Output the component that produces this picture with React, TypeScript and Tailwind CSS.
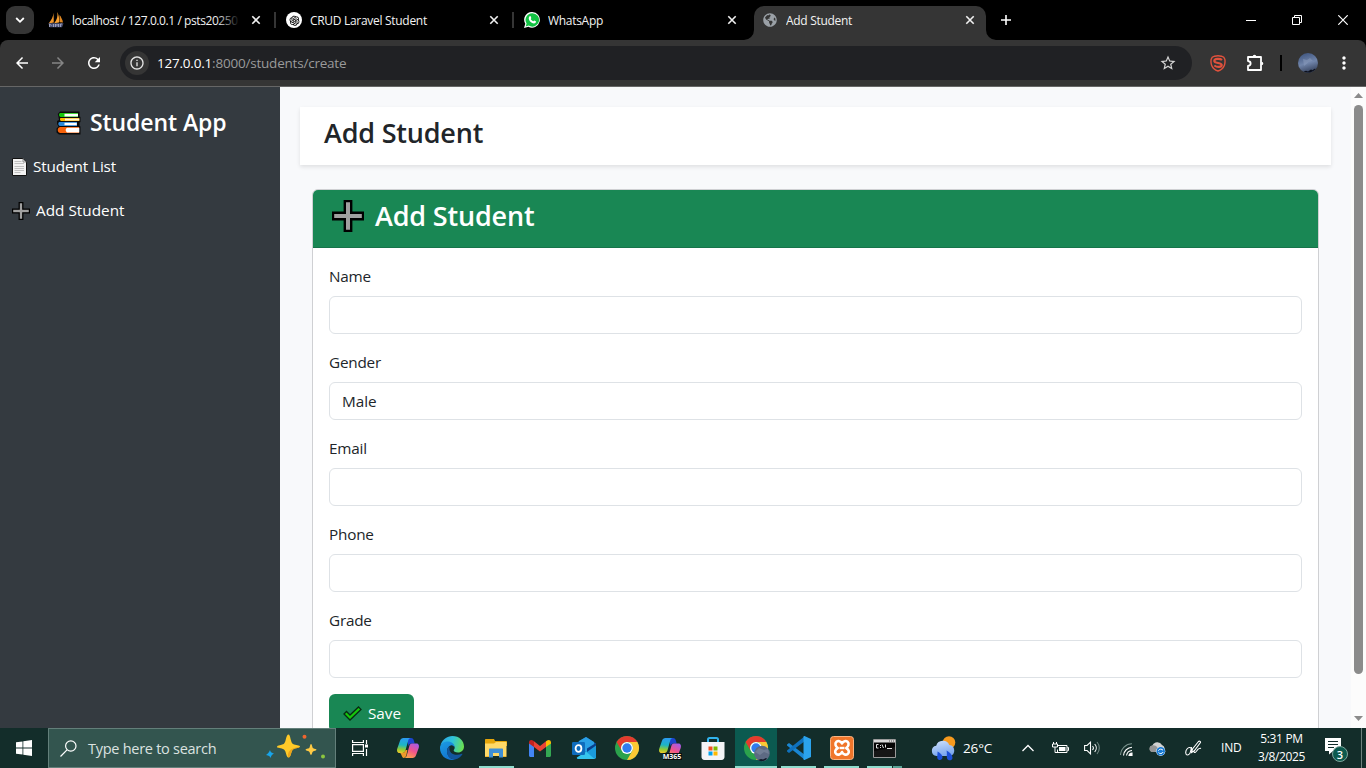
import type { ReactNode } from "react";
import { MdArrowBack, MdArrowForward, MdRefresh, MdStarBorder, MdInfoOutline, MdMoreVert } from "react-icons/md";
import { AiOutlineOpenAI } from "react-icons/ai";
import { FaGlobeAmericas } from "react-icons/fa";

/* ---------- browser chrome ---------- */

function SailsIcon() {
  return (
    <svg width="16" height="16" viewBox="0 0 16 16">
      <path d="M5.6.8C5.200 4.500 3.600 8 .6 11.500l5.200-.9z" fill="#f0962c" />
      <path d="M9.200 0C10 4 9.200 7.500 6.200 11.200l4.800-.7C11.500 6.500 10.800 3 9.200 0z" fill="#f8a030" />
      <path d="M11.500 3c1.700 2 2.900 4.500 3.500 7.500l-3.500-.3z" fill="#dd8622" />
      <path d="M.5 11.200h15l-1.500 4H1.500z" fill="#4d5276" />
      <path d="M1.500 15v-3l2 1.500M5.500 15v-3M7.500 15v-3l1.500 1.500 1.500-1.500v3M12.500 15v-3h1.500" stroke="#a9aecb" strokeWidth=".8" fill="none" />
    </svg>
  );
}

function CloseX() {
  return (
    <svg width="10" height="10" viewBox="0 0 10 10" stroke="#f1f1f1" strokeWidth="1.600">
      <path d="M1.300 1.300l7.400 7.400M8.700 1.300L1.300 8.700" />
    </svg>
  );
}

function Tab({ icon, title, active, divider, fade }: { icon: ReactNode; title: string; active?: boolean; divider?: boolean; fade?: boolean }) {
  return (
    <div className={active ? "relative mt-1.5 flex h-[34px] w-[232px] shrink-0 items-start rounded-t-[10px] bg-[#353535] pl-2" : "relative mt-1.5 flex h-[34px] w-[238px] shrink-0 items-start pl-2"}>
      <div className="mt-1.5 flex size-4 shrink-0 items-center justify-center">{icon}</div>
      <div className={(fade ? "tracking-[-0.42px]" : "tracking-[-0.3px]") + " relative ml-2 mt-[5px] w-[168px] overflow-hidden whitespace-nowrap text-[12px] leading-5 text-[#f2f2f2]"}>
        {title}
        {fade && <div className="absolute inset-y-0 right-0 w-6 bg-linear-to-r from-transparent to-black" />}
      </div>
      <div className="ml-[11px] mt-[9px]"><CloseX /></div>
      {divider && <div className="ml-[13px] mt-1.5 h-4 w-0.5 bg-[#353535]" />}
      {active && (
        <>
          <svg className="absolute -left-2.5 bottom-0" width="10" height="10"><path d="M10 0v10H0A10 10 0 0 0 10 0z" fill="#353535" /></svg>
          <svg className="absolute -right-2.5 bottom-0" width="10" height="10"><path d="M0 0v10h10A10 10 0 0 1 0 0z" fill="#353535" /></svg>
        </>
      )}
    </div>
  );
}

function TabStrip() {
  return (
    <div className="flex h-10 shrink-0 bg-black pl-1.5">
      <div className="mr-1.5 mt-1.5 flex size-7 items-center justify-center rounded-[9px] bg-[#353535]">
        <svg width="10" height="10" viewBox="0 0 10 10" fill="none" stroke="#fff" strokeWidth="1.800"><path d="M1.200 3l3.800 3.800L8.800 3" /></svg>
      </div>
      <Tab icon={<SailsIcon />} title="localhost / 127.0.0.1 / psts20250" divider fade />
      <Tab
        icon={<div className="flex size-4 items-center justify-center rounded-full bg-white text-black"><AiOutlineOpenAI size={13} /></div>}
        title="CRUD Laravel Student"
        divider
      />
      <Tab
        icon={
          <svg width="16" height="16" viewBox="0 0 16 16">
            <path d="M8.200 0a7.800 7.800 0 1 1-3.800 14.700L0 16l1.300-4.200A7.800 7.800 0 0 1 8.200 0z" fill="#fff" />
            <path d="M8.200 1.200a6.700 6.700 0 1 1-3.500 12.300l-3 .9.900-2.900A6.700 6.700 0 0 1 8.200 1.200z" fill="#12c143" />
            <path d="M5.600 4.300c.3-.3.900-.3 1.100.1l.6 1.500c.1.300-.6.900-.6 1.200.5 1 1.400 1.800 2.400 2.200.4 0 .8-.9 1.200-.8l1.500.8c.4.200.1 1.300-.4 1.700-1.500 1.200-4.200-.2-5.500-1.700C4.800 7.900 4.100 5.800 5.600 4.300z" fill="#fff" />
          </svg>
        }
        title="WhatsApp"
      />
      <Tab icon={<FaGlobeAmericas size={14} color="#9aa0a6" />} title="Add Student" active />
      <div className="ml-[15px] mt-[15px]">
        <svg width="10" height="10" viewBox="0 0 10 10" stroke="#fff" strokeWidth="1.600"><path d="M5 0v10M0 5h10" /></svg>
      </div>
      <div className="ml-auto flex h-10">
        <div className="flex w-[46px] items-center justify-center">
          <svg width="10" height="10" stroke="#fff"><path d="M0 5.500h10" /></svg>
        </div>
        <div className="flex w-[46px] items-center justify-center">
          <svg width="10" height="10" stroke="#fff" fill="none"><path d="M.5 2.500h7v7h-7zM2.500 2.500v-2h7v7h-2" /></svg>
        </div>
        <div className="flex w-[46px] items-center justify-center">
          <svg width="10" height="10" stroke="#fff" strokeWidth="1.200"><path d="M.3.3l9.400 9.400M9.700.3L.3 9.700" /></svg>
        </div>
      </div>
    </div>
  );
}

function Toolbar() {
  return (
    <div className="h-[47px] shrink-0 bg-black">
      <div className="flex h-[47px] items-center rounded-t-lg border-b border-[#666] bg-[#353535] pl-[13px]">
        <div className="flex w-[107px] gap-[18px]">
          <MdArrowBack size={18} color="#fff" />
          <MdArrowForward size={18} color="#858585" />
          <MdRefresh size={18} color="#fff" />
        </div>
        <div className="flex h-[34px] w-[1072px] items-center rounded-full bg-[#202124] pl-[5px] pr-[15px]">
          <div className="flex size-6 items-center justify-center rounded-full bg-[#353535]"><MdInfoOutline size={16} color="#e3e3e3" /></div>
          <div className="ml-2 text-[13.500px] tracking-[-0.210px] text-[#9a9a9a]"><span className="text-white">127.0.0.1</span>:8000/students/create</div>
          <MdStarBorder size={18} color="#d5d5d5" className="ml-auto" />
        </div>
        <svg className="ml-[18px]" width="16" height="17" viewBox="0 0 16 17" fill="none" stroke="#e0523d">
          <path d="M4.500 1.200C6 .8 10 .8 11.500 1.200c1.700.5 3 1.500 3.300 3 .4 2 .3 4-.4 6C13.500 12.700 11 15 8 16c-3-1-5.500-3.300-6.400-5.800-.7-2-.8-4-.4-6 .3-1.500 1.600-2.500 3.300-3z" strokeWidth="1.400" />
          <path d="M12 5C10 3.300 4.300 3.500 4.300 6c0 2.700 7.400 1.300 7.400 4 0 2.500-4.800 2.500-7.400.5" strokeWidth="2.200" />
        </svg>
        <svg className="ml-5" width="18" height="18" viewBox="0 0 18 18" fill="none" stroke="#fff" strokeWidth="1.800">
          <path d="M2 3h13v13H2v-4c3.500-.5 3.500-4.500 0-5z" strokeLinejoin="round" />
          <path d="M6.700 2.500a1.800 1.800 0 0 1 3.600 0zM15.500 7.700a1.800 1.800 0 0 1 0 3.600z" fill="#fff" stroke="none" />
        </svg>
        <div className="ml-4 h-4 w-0.5 bg-black" />
        <svg className="ml-4" width="20" height="20">
          <defs><linearGradient id="sky" x1="0" y1="0" x2=".3" y2="1"><stop offset="0" stopColor="#384f7a" /><stop offset=".6" stopColor="#7185aa" /><stop offset="1" stopColor="#3d4a66" /></linearGradient></defs>
          <circle cx="10" cy="10" r="10" fill="url(#sky)" />
          <path d="M5 6l4 1 3-2 3 3-4 1-5 4z" fill="#8b9bbb" opacity=".55" />
          <path d="M5.500 18.500l2.500-.8 2 .8 3-2 1.500.8 2-1.500 1.200.2A10 10 0 0 1 5.500 18.500z" fill="#0c101c" />
        </svg>
        <MdMoreVert size={20} color="#fff" className="ml-4" />
      </div>
    </div>
  );
}

/* ---------- page ---------- */

function HeavyPlus({ size, stroke = 1.500 }: { size: number; stroke?: number }) {
  return (
    <svg width={size} height={size} viewBox="0 0 32 32">
      <path d="M12.800 1h6.400v11.800H31v6.400H19.200V31h-6.400V19.200H1v-6.400h11.800z" fill="#a0a0a0" stroke="#000" strokeWidth={stroke * 1.400} />
    </svg>
  );
}

function Books() {
  return (
    <svg width="25" height="24" viewBox="0 0 25 24">
      <path d="M4 .5h19.500v5L24.500 6v5l-1 .5V15l1 .5v8H3l-2.500-2v-4l2-2L1 13v-3l2-1-.5-3L1.800 3z" fill="#0b0b0b" />
      <path d="M4 2h18v4H4.500C2.600 5.500 2.600 2.700 4 2z" fill="#16c60c" /><path d="M8.500 2.800H22v2.700H8.500z" fill="#fff" />
      <path d="M4.500 7h18.800v3H5c-1.200-.5-1.300-2.500-.5-3z" fill="#ffb900" /><path d="M9 7.600h14.300v1.900H9z" fill="#fff4dc" />
      <path d="M3.500 11H21v4H4c-2-.3-2.300-3.400-.5-4z" fill="#2b88d8" /><path d="M8.500 11.800h12.300v2.400H8.500z" fill="#fff" />
      <path d="M4 16h19v6H4c-3-.6-3-5.400 0-6z" fill="#f7630c" /><path d="M11 16.800h12.300v4.600H11c-1.800-1-1.800-3.600 0-4.600z" fill="#fff" />
    </svg>
  );
}

function PageIcon() {
  return (
    <svg width="15" height="18" viewBox="0 0 15 18">
      <path d="M.5.500h10.500l3.500 3.500v13.500H.5z" fill="#f2f2f2" stroke="#111" />
      <path d="M2.500 3.500h7M2.500 5.500h9.500M2.500 8.500h9.500M2.500 10.500h9.500M2.500 12.500h9.500M2.500 14.500h6" stroke="#b3b3b3" strokeWidth=".8" />
      <path d="M11 .5v3.500h3.500" fill="none" stroke="#777" strokeWidth=".8" />
    </svg>
  );
}

function Sidebar() {
  return (
    <aside className="flex w-[280px] shrink-0 flex-col bg-[#343a40] text-white">
      <div className="mt-5 flex h-8 items-center pl-14">
        <Books />
        <span className="-mt-0.5 ml-[9px] text-[23px] font-semibold leading-8 tracking-[-0.08px]">Student App</span>
      </div>
      <div className="ml-3 mt-2 flex h-10 items-center">
        <PageIcon />
        <span className="-mt-0.5 ml-1.5 text-[15.300px] tracking-[-0.12px]">Student List</span>
      </div>
      <div className="ml-3 mt-1 flex h-10 items-center">
        <HeavyPlus size={18} stroke={1.600} />
        <span className="-mt-0.5 ml-1.5 text-[15.300px] tracking-[0.02px]">Add Student</span>
      </div>
    </aside>
  );
}

function Field({ label, value }: { label: string; value?: string }) {
  return (
    <div className="mb-4">
      <div className="mb-2 h-6 text-[15.300px] leading-6 tracking-[-0.22px]">{label}</div>
      <div className="h-[38px] rounded-md border border-[#dee2e6] px-3 text-[15.300px] leading-9 tracking-[-0.05px]">{value}</div>
    </div>
  );
}

function Content() {
  return (
    <main className="min-w-0 flex-1 bg-[#f8f9fb] p-5 text-[#212529]">
      <div className="h-[58px] bg-white pl-6 text-[27px] font-semibold leading-[51px] tracking-[-0.2px] shadow-[0_2px_4px_rgba(0,0,0,0.1)]">Add Student</div>
      <div className="mx-3 mt-6 h-[600px] overflow-hidden rounded-md border border-[#cfd0d3] bg-white">
        <div className="flex h-[58px] items-start border-b border-[#16744a] bg-[#198754] pl-[19px] text-white">
          <div className="mt-2.5"><HeavyPlus size={32} stroke={1.700} /></div>
          <span className="ml-[11px] text-[27px] font-semibold leading-[51px] tracking-[-0.18px]">Add Student</span>
        </div>
        <div className="p-4">
          <Field label="Name" />
          <Field label="Gender" value="Male" />
          <Field label="Email" />
          <Field label="Phone" />
          <Field label="Grade" />
          <div className="flex h-[38px] w-[85px] items-center rounded-md bg-[#198754] pl-3.5 text-white">
            <svg width="19" height="15" viewBox="0 0 19 15"><path d="M1 8l2.500-2.500L7 9 15.500 1 18 3.400 7 14z" fill="#16c60c" stroke="#062b12" strokeWidth="1.300" /></svg>
            <span className="ml-1.5 text-[15.300px] tracking-[-0.05px]">Save</span>
          </div>
        </div>
      </div>
    </main>
  );
}

function Scrollbar() {
  return (
    <div className="flex w-[15px] shrink-0 flex-col items-center bg-[#fcfcfc] pt-1.5">
      <svg width="9" height="5"><path d="M4.500 0L9 5H0z" fill="#8b8b8b" /></svg>
      <div className="mt-[7px] h-[569px] w-[9px] rounded-full bg-[#8b8b8b]" />
      <svg className="mt-[42px]" width="9" height="5"><path d="M4.500 5L9 0H0z" fill="#8b8b8b" /></svg>
    </div>
  );
}

/* ---------- taskbar ---------- */

function Copilot({ tag }: { tag?: boolean }) {
  return (
    <svg width="24" height="24" viewBox="0 0 24 24">
      <defs>
        <linearGradient id="cpa" x1=".3" y1="0" x2=".2" y2="1"><stop offset="0" stopColor="#2b9cf0" /><stop offset=".45" stopColor="#1cb5c4" /><stop offset=".75" stopColor="#8fcb35" /><stop offset="1" stopColor="#f5c927" /></linearGradient>
        <linearGradient id="cpb" x1=".8" y1="0" x2=".3" y2="1"><stop offset="0" stopColor="#a45bea" /><stop offset=".5" stopColor="#f0528c" /><stop offset="1" stopColor="#ffa04a" /></linearGradient>
      </defs>
      <path d="M11 2h4c1.800 0 2.500 1.300 3 3l.7 2.500h-3c-2 0-2.700 1-3.200 2.700z" fill="#1b45cf" />
      <path d="M7.500 2h7c-1.700.3-2 1.500-2.400 3L9.600 14c-.6 2-1.500 3-3.300 3H3.500C1 17 .7 14.500 1.300 12.500L4 4.700C4.700 2.800 5.700 2 7.500 2z" fill="url(#cpa)" />
      {!tag && <path d="M6.300 17c1.800 0 2.700-1 3.300-3l1.800 0-1 5c-.4 2-1.700 3-3.200 3-1.400-.8-1.500-3.500-3-5z" fill="#f09a2b" />}
      <path d="M16 7.500h4.500c2.500 0 2.800 2.500 2.200 4.500L20 19.300c-.7 1.900-1.700 2.700-3.500 2.700H8.200c1.700-.3 2.300-1.500 2.700-3l2.300-8.500c.5-2 1.200-3 2.800-3z" fill="url(#cpb)" />
    </svg>
  );
}

function M365() {
  return (
    <div className="relative size-6">
      <Copilot tag />
      <div className="absolute left-[5px] top-[17px] h-[7px] w-[19px] bg-[#0b0f0e] text-center text-[7px] font-bold leading-[7px] text-white">M365</div>
    </div>
  );
}

function Edge() {
  return (
    <svg width="24" height="24" viewBox="0 0 24 24">
      <defs>
        <linearGradient id="ea" x1="0" y1=".3" x2="1" y2=".5"><stop offset="0" stopColor="#2aa6e6" /><stop offset=".5" stopColor="#30c4d8" /><stop offset="1" stopColor="#6be04f" /></linearGradient>
        <linearGradient id="eb" x1="0" y1="0" x2=".5" y2="1"><stop offset="0" stopColor="#1b9de2" /><stop offset="1" stopColor="#1373d1" /></linearGradient>
      </defs>
      <path d="M.6 9C2.400 3.500 7 0 12.300 0 19.500 0 24 5 24 10.500c0 3.500-2.500 6-6 6-3 0-4.500-1.300-4.300-2.200.2-.7 1-1 1-2.800C14.500 9 11.500 7 8.200 7 5 7 2.200 8 .6 9z" fill="url(#ea)" />
      <path d="M0 12c0-4 3.500-6.500 7.700-6.500 4 0 6.900 2.500 6.900 6-.4-1.500-2-2.500-3.300-2.300C8.500 10 7 12.300 7 15c0 5 4 8.500 8 8.500-1 .4-2 .5-3 .5C5.500 24 0 19 0 12z" fill="url(#eb)" />
      <path d="M9.700 10.300C8 11.300 7 13 7 15.500 7 20 10.500 23.700 15 23.500c3.500-.6 6-2.700 7.400-5.200.3-.5-.2-.8-.6-.6-5.500 2.700-11.600.3-12.300-4-.2-1.200-.1-2.400.2-3.400z" fill="#12559d" />
    </svg>
  );
}

function Chrome({ avatar }: { avatar?: boolean }) {
  return (
    <svg width="24" height="24" viewBox="0 0 24 24" overflow="visible">
      <circle cx="12" cy="12" r="12" fill="#2ba24c" />
      <path d="M1.600 6A12 12 0 0 1 22.400 6H12a6 6 0 0 0-5.200 9z" fill="#e33b2e" />
      <path d="M22.400 6A12 12 0 0 1 12 24l5.200-9A6 6 0 0 0 12 6z" fill="#fcc934" />
      <circle cx="12" cy="12" r="6" fill="#fff" /><circle cx="12" cy="12" r="4.700" fill="#2f7cf0" />
      {avatar && <><circle cx="18" cy="17.500" r="7.800" fill="#5d6a83" /><path d="M11 16l4-4 5 2 4-1 1 5-5-2-4 3z" fill="#8591a8" opacity=".5" /><path d="M14 24l3-1 2 .6 3-1.500 1 .6c-3 3-7 3-9 1.300z" fill="#111827" /></>}
    </svg>
  );
}

function Explorer() {
  return (
    <svg width="22" height="19" viewBox="0 0 22 19">
      <path d="M0 1c0-.6.400-1 1-1h8l1 2h11c.6 0 1 .4 1 1v4H0z" fill="#e5a50a" />
      <path d="M0 4.500h9L11 3h10.500v14H0z" fill="#ffd968" />
      <path d="M4 18.500v-8c0-.6.4-1 1-1h12c.6 0 1 .4 1 1v8h-4v-4.500H8v4.500z" fill="#3f8fd6" />
      <path d="M0 17h4v1H0zM18 17h3.500v1H18z" fill="#f2b632" />
    </svg>
  );
}

function Gmail() {
  return (
    <svg width="22" height="17" viewBox="0 0 22 17">
      <path d="M0 2.500l5 3.800V17H1.500C.7 17 0 16.300 0 15.500z" fill="#4285f4" />
      <path d="M22 2.500l-5 3.800V17h3.500c.8 0 1.500-.7 1.500-1.500z" fill="#34a853" />
      <path d="M5 1.300l6 4.600 6-4.600v5.600l-6 4.600-6-4.600z" fill="#ea4335" />
      <path d="M0 2.500C0 .2 2.500-.6 4.300.8L5 1.300v5.600L0 3.500z" fill="#c5221f" />
      <path d="M22 2.500c0-2.300-2.500-3.100-4.300-1.700l-.7.5v5.600l5-3.400z" fill="#fbbc04" />
    </svg>
  );
}

function Outlook() {
  return (
    <svg width="24" height="22" viewBox="0 0 24 22">
      <path d="M4 6l10-6 10 6.500v3L13 15 4 9z" fill="#1066b5" />
      <path d="M7 4l7-4 8 5v5l-8 5-7-4z" fill="#2aa0e6" />
      <path d="M24 7v13c0 1.200-.8 2-2 2H6.500c-1 0-1.700-.6-1.700-1.600L15 14z" fill="#35c4ee" />
      <path d="M24 7L14 14.500l8 7c1.200 0 2-.6 2-1.500z" fill="#1b9bdc" />
      <path d="M15 11.500L24 6v2.500L15 15z" fill="#0a3f8c" />
      <rect y="5" width="13" height="13" rx="1.200" fill="#0f6cbd" />
      <ellipse cx="6.500" cy="11.500" rx="2.900" ry="3.300" fill="none" stroke="#fff" strokeWidth="1.800" />
    </svg>
  );
}

function Store() {
  return (
    <svg width="24" height="23" viewBox="0 0 24 23">
      <path d="M7 5V2.500C7 1.500 7.500 1 8.500 1h7c1 0 1.500.5 1.500 1.500V5" fill="none" stroke="#31b4ee" strokeWidth="2" />
      <path d="M.5 5h23v15c0 1.500-1 3-3 3h-17c-2 0-3-1.500-3-3z" fill="#f4f4f6" />
      <path d="M7.500 9.500h4v4h-4z" fill="#f25022" /><path d="M12.500 9.500h4v4h-4z" fill="#7fba00" />
      <path d="M7.500 14.500h4v4h-4z" fill="#00a4ef" /><path d="M12.500 14.500h4v4h-4z" fill="#ffb900" />
    </svg>
  );
}

function VsCode() {
  return (
    <svg width="24" height="24" viewBox="0 0 24 24">
      <path d="M0 8.500L2 7l16 12v5L.3 9.700c-.5-.4-.6-.8-.3-1.200z" fill="#1a86d2" />
      <path d="M0 15.500L2 17 18 5V0L.3 14.300c-.5.4-.6.8-.3 1.200z" fill="#0f71bd" />
      <path d="M17.500 0L24 3v18l-6.500 3c-.8 0-1-.4-1-1V1c0-.6.200-1 1-1z" fill="#2ba3ec" />
    </svg>
  );
}

function Xampp() {
  return (
    <svg width="24" height="24" viewBox="0 0 24 24">
      <rect x=".5" y=".5" width="23" height="23" rx="3" fill="#f0762b" stroke="#f9b583" />
      <path
        d="M12 7.500c-1.300-2.700-4-3-5.500-1.700-2 1.700-1 4.700 1.300 6.200-2.800 1.500-3.500 4.500-1.500 6 1.700 1.300 4.400.5 5.700-2 1.300 2.500 4 3.300 5.700 2 2-1.500 1.300-4.500-1.500-6 2.300-1.500 3.300-4.500 1.300-6.200-1.500-1.300-4.200-1-5.500 1.700z"
        fill="none" stroke="#fff" strokeWidth="2.600" strokeLinejoin="round"
      />
      <path d="M9.500 12h5" stroke="#fff" strokeWidth="2.400" />
    </svg>
  );
}

function Terminal() {
  return (
    <svg width="23" height="19" viewBox="0 0 23 19">
      <path d="M.5.500h22v18H.5z" fill="#050505" stroke="#9a9a9a" />
      <path d="M1 1h21v2.500H1z" fill="#d9d9d9" />
      <path d="M16 2h1M18 2h1M20 2h1" stroke="#555" />
      <path d="M5.500 5.500h-2v3.500h2M7.500 6v1M7.500 8v1M9 5.500l1.500 3.500M12.500 5.500v3M14 9.500h5" stroke="#e2e2e2" fill="none" />
      <path d="M1 12L22 8v10H1z" fill="#fff" opacity=".07" />
    </svg>
  );
}

function TaskButton({ children, narrow, bar, active }: { children: ReactNode; narrow?: boolean; bar?: ReactNode; active?: boolean }) {
  return (
    <div className={(narrow ? "w-[43px]" : "w-11") + " flex h-10 flex-col items-center"}>
      <div className={(active ? "w-[42px] bg-[#0b5a50]" : "w-full") + " flex h-[38px] items-center justify-center pt-0.5"}>{children}</div>
      {bar}
    </div>
  );
}

function Taskbar() {
  const line = <div className="h-0.5 w-[35px] bg-[#8fdccd]" />;
  return (
    <div className="flex h-10 shrink-0 bg-[#132d2a] text-white">
      <div className="flex w-12 items-center justify-center">
        <svg width="16" height="16" viewBox="0 0 16 16" fill="#fff"><path d="M0 2.300l6.500-.9v6.200H0zM7.300 1.300L16 0v7.600H7.300zM0 8.400h6.500v6.200L0 13.700zM7.300 8.400H16V16l-8.700-1.200z" /></svg>
      </div>
      <div className="flex w-72 items-center border border-[#637f7a] bg-[#33554f] pl-[11px]">
        <svg width="17" height="17" viewBox="0 0 17 17" fill="none" stroke="#fff" strokeWidth="1.200"><circle cx="10.800" cy="6" r="5.200" /><path d="M7 9.800L.5 16.500" /></svg>
        <span className="ml-[11px] w-[129px] whitespace-nowrap pt-px text-[14.500px] tracking-[-0.27px] text-[#dbe2e0]">Type here to search</span>
        <svg className="-mt-0.5 ml-[48px]" width="61" height="26" viewBox="0 0 61 26">
          <path d="M5 16c.7 2 1 2.500 4 3.500-2.500 1.500-2.800 2-3.300 4.500-1.200-2-1.700-2.500-4.700-3 2-1.500 2.800-2 4-5z" fill="#18a5ea" />
          <path d="M23.500.5c2 0 2 8 4.500 9.500s7 1 7 2.500-5 1.300-7 3-2 8-4.500 8-2-6-4.500-8-7-1-7-2.800 5-1.500 7-3S21 .5 23.500.5z" fill="#ffca28" />
          <path d="M23.500 23.500c2.500 0 2.500-6.300 4.500-8s7-1.500 7-3c-3 1-8 1-11 5-1 1.500-1.500 4-.5 6z" fill="#eda51b" />
          <path d="M46 10c1.200 0 1 3.500 2.300 4.300s3.200.5 3.200 1.500-2.500 1-3.500 1.800-1 3.400-2 3.400-1-2.600-2-3.400-3.500-.8-3.500-1.800 2.500-.9 3.500-1.500S45 10 46 10z" fill="#ffca44" />
          <circle cx="39.500" cy="2.700" r="2" fill="#f0652f" /><circle cx="58" cy="22.500" r="2" fill="#8cc63f" />
        </svg>
      </div>
      <div className="flex w-[50px] items-center pl-4">
        <svg width="17" height="16" viewBox="0 0 17 16" fill="none" stroke="#fff" strokeWidth="1.200"><path d="M.6 0v2.500h10.800V0M.6 4.600h10.800v6.800H.6zM.6 16v-2.500h10.800V16M14.500 0v4M14.500 9v7" /><path d="M13 4.500h3v3h-3z" fill="#fff" stroke="none" /></svg>
      </div>
      <TaskButton><Copilot /></TaskButton>
      <TaskButton><Edge /></TaskButton>
      <TaskButton bar={line}><Explorer /></TaskButton>
      <TaskButton><Gmail /></TaskButton>
      <TaskButton narrow><Outlook /></TaskButton>
      <TaskButton narrow><Chrome /></TaskButton>
      <TaskButton narrow><M365 /></TaskButton>
      <TaskButton narrow><Store /></TaskButton>
      <TaskButton narrow active bar={<div className="h-0.5 w-[42px] bg-[#8fdccd]" />}><Chrome avatar /></TaskButton>
      <TaskButton narrow bar={line}><VsCode /></TaskButton>
      <TaskButton narrow bar={line}><Xampp /></TaskButton>
      <TaskButton narrow bar={<div className="flex h-0.5 w-[35px] gap-px"><div className="w-[25px] bg-[#8fdccd]" /><div className="flex-1 bg-[#5ba295]" /></div>}><Terminal /></TaskButton>

      <div className="flex flex-1 items-center pl-[25px] pr-1">
        <svg width="25" height="25" viewBox="0 0 25 25">
          <defs><linearGradient id="wc" x1="0" y1="0" x2=".3" y2="1"><stop offset="0" stopColor="#cfe1fc" /><stop offset="1" stopColor="#7da9ef" /></linearGradient></defs>
          <circle cx="18" cy="6.500" r="6.300" fill="#f79a1e" />
          <path d="M5.500 20a5.200 5.200 0 0 1-.3-10.300A7 7 0 0 1 18.300 9 5.600 5.600 0 0 1 19 20z" fill="url(#wc)" />
          <path d="M6.500 15.500c3 1.500 5 3.500 5 6 0 3-4.500 3.500-5.200.5-.4-2 .5-4 .2-6.500zM15.500 14.500c3.500 2 6.200 4.500 6 7.500-.3 3-4.700 3.200-5.500.3-.5-2.500.3-5-.5-7.800z" fill="#1c50d8" />
        </svg>
        <span className="ml-[7px] w-[30px] whitespace-nowrap text-[13.500px] tracking-[-0.15px]">26°C</span>
        <svg className="ml-[29px]" width="12" height="8" fill="none" stroke="#fff" strokeWidth="1.300"><path d="M.5 7L6 1.500 11.500 7" /></svg>
        <svg className="ml-[18px]" width="17" height="13" viewBox="0 0 17 13" fill="none" stroke="#fff">
          <path d="M6 3.500h9v7H5.500v-3M15.500 5.500h1v3h-1M1.500 0v2M4.500 0v2M.5 2h5v3h-5zM3 5v5.500h3" /><path d="M7 5h6.500v4H7z" fill="#fff" stroke="none" />
        </svg>
        <svg className="ml-[15px]" width="17" height="14" viewBox="0 0 17 14" fill="none" stroke="#fff" strokeWidth="1.100"><path d="M.6 4.500h2.500L6.500 1.200v11.600L3.100 9.500H.6zM8.500 5a3 3 0 0 1 0 4M10.700 3a6 6 0 0 1 0 8" /><path d="M13 1a9 9 0 0 1 0 12" stroke="#6f8581" /></svg>
        <svg className="ml-[19px] mt-0.5" width="13" height="13" viewBox="0 0 13 13" fill="none" stroke="#fff" strokeWidth="1.100"><path d="M.5 12A11.500 11.500 0 0 1 12 .8" stroke="#78908b" /><path d="M3.500 12.500A9 9 0 0 1 12 4.200M6.500 12.500A6 6 0 0 1 12 7.500" /><path d="M9 12.500a3 3 0 0 1 3-2.500v2.500z" fill="#fff" /></svg>
        <svg className="ml-4 mt-0.5" width="17" height="14" viewBox="0 0 17 14">
          <path d="M3.500 10a3.300 3.300 0 0 1 0-6.500A5.300 5.300 0 0 1 13 3a4 4 0 0 1 1 7z" fill="#d2d2d2" /><path d="M3 10a3.300 3.300 0 0 1 .5-6.500C5 3 7 4 8.500 5.500l-2 4.500z" fill="#969696" />
          <circle cx="11.700" cy="9.300" r="4.600" fill="#e8f3fc" /><circle cx="11.700" cy="9.300" r="4.200" fill="#1679d3" /><path d="M9.300 8.700c1-2 3.700-2 4.700-.4M14.200 10c-1 2-3.700 2-4.700.4" stroke="#fff" fill="none" />
        </svg>
        <svg className="ml-[19px]" width="17" height="17" viewBox="0 0 17 17" fill="none" stroke="#fff" strokeWidth="1.100"><path d="M6.500 12.500l1-3.500 6-7.500c1-1 2.500.2 1.800 1.300l-6 8zM6.500 12.500C8 7 4 6.500 2 9s-1.500 6 .5 6c2.500 0 3.500-4 4-8M9 11c0 3 2 1 3-.5s3-2.500 4-2" /></svg>
        <span className="ml-[19px] w-5 text-[12px] tracking-[-0.2px]">IND</span>
        <div className="ml-3 w-[57px] whitespace-nowrap text-center text-[12px] leading-[18px] tracking-[-0.35px]"><div>5:31 PM</div><div>3/8/2025</div></div>
        <div className="relative ml-[15px] size-6 pt-px">
          <svg width="17" height="18" viewBox="0 0 17 18"><path d="M0 1h16v13H8l-4 3.500V14H0z" fill="#fff" /><path d="M3 4.500h10M3 7.500h10M3 10.500h6" stroke="#132d2a" /></svg>
          <div className="absolute left-[7px] top-[10px] flex size-4 items-center justify-center rounded-full border border-[#7fa59c] bg-[#0c5a4e] text-[11px] font-semibold leading-none">3</div>
        </div>
        <div className="ml-auto h-10 w-px bg-[#6e827e]" />
      </div>
    </div>
  );
}

export default function App() {
  return (
    <div className="flex h-[768px] w-[1366px] flex-col overflow-hidden bg-black font-['Open_Sans','Noto_Sans',sans-serif]">
      <TabStrip />
      <Toolbar />
      <div className="flex h-[641px] shrink-0 overflow-hidden">
        <Sidebar />
        <Content />
        <Scrollbar />
      </div>
      <Taskbar />
    </div>
  );
}
